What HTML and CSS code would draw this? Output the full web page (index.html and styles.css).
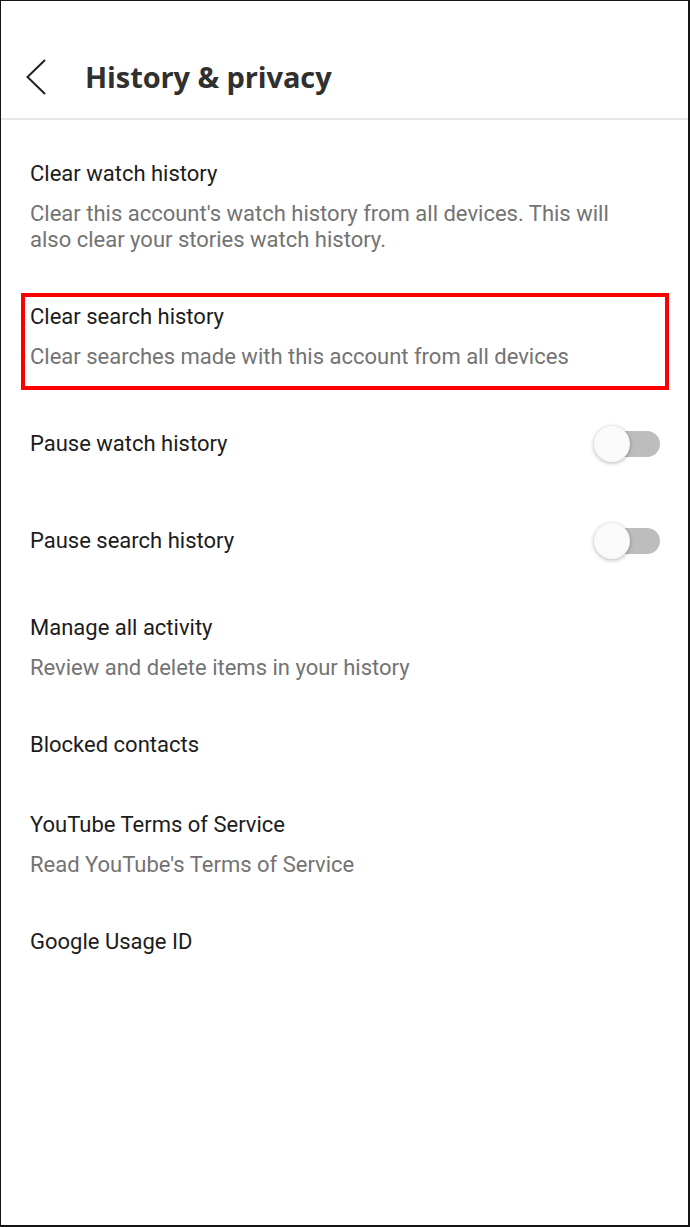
FILE: index.html
```html
<!DOCTYPE html>
<html lang="en">
<head>
<meta charset="utf-8">
<title>History &amp; privacy</title>
<link rel="stylesheet" href="styles.css">
</head>
<body>
<div class="page">
  <header class="header">
    <svg class="back" width="20" height="36" viewBox="0 0 20 36" aria-hidden="true">
      <path d="M19 1 L1.5 18 L19 35" fill="none" stroke="#222" stroke-width="2"/>
    </svg>
    <h1 class="title">History &amp; privacy</h1>
  </header>
  <div class="list">
    <div class="item">
      <div class="label">Clear watch history</div>
      <div class="desc">Clear this account's watch history from all devices. This will also clear your stories watch history.</div>
    </div>
    <div class="item highlight">
      <div class="label">Clear search history</div>
      <div class="desc">Clear searches made with this account from all devices</div>
    </div>
    <div class="item toggle-row">
      <div class="label">Pause watch history</div>
      <div class="switch"><span class="track"></span><span class="thumb"></span></div>
    </div>
    <div class="item toggle-row">
      <div class="label">Pause search history</div>
      <div class="switch"><span class="track"></span><span class="thumb"></span></div>
    </div>
    <div class="item">
      <div class="label">Manage all activity</div>
      <div class="desc">Review and delete items in your history</div>
    </div>
    <div class="item single">
      <div class="label">Blocked contacts</div>
    </div>
    <div class="item">
      <div class="label">YouTube Terms of Service</div>
      <div class="desc">Read YouTube's Terms of Service</div>
    </div>
    <div class="item single">
      <div class="label">Google Usage ID</div>
    </div>
  </div>
</div>
</body>
</html>
```
FILE: styles.css
```css
html, body {
  margin: 0;
  padding: 0;
  background: #fff;
}

.page {
  width: 690px;
  height: 1227px;
  box-sizing: border-box;
  border: 1px solid #151515;
  border-right-width: 2px;
  border-bottom-width: 2px;
  background: #fff;
  font-family: Roboto, "Liberation Sans", sans-serif;
  overflow: hidden;
}

.header {
  height: 119px;
  box-sizing: border-box;
  border-bottom: 2px solid #e8e8e8;
  padding: 0 0 23px 25px;
  display: flex;
  align-items: flex-end;
  gap: 39px;
}

.back {
  display: block;
  flex: none;
}

.title {
  margin: 0;
  font-family: "Open Sans", "Noto Sans", sans-serif;
  font-weight: 700;
  font-size: 29px;
  line-height: 36px;
  color: #303030;
  letter-spacing: -0.1px;
}

.list {
  padding-top: 15px;
}

.item {
  padding: 25px 28px 25px 29px;
  position: relative;
}

.item.single {
  padding-bottom: 27px;
}

.label {
  font-size: 22px;
  line-height: 28px;
  color: #1c1c1c;
}

.desc {
  margin-top: 13px;
  padding-right: 30px;
  font-size: 22px;
  line-height: 26px;
  color: #737373;
}

.highlight::after {
  content: "";
  position: absolute;
  top: 15px;
  bottom: 5px;
  left: 20px;
  right: 19px;
  border: 4px solid #ff0000;
}

.toggle-row {
  display: flex;
  align-items: center;
  justify-content: space-between;
  padding-top: 35px;
  padding-bottom: 34px;
}

.switch {
  position: relative;
  width: 66px;
  height: 28px;
  flex: none;
}

.track {
  position: absolute;
  right: 0;
  top: 1px;
  width: 60px;
  height: 26px;
  border-radius: 13px;
  background: #bdbdbd;
}

.thumb {
  position: absolute;
  left: 0;
  top: -4px;
  width: 36px;
  height: 36px;
  border-radius: 50%;
  background: #fafafa;
  box-shadow: 0 1px 4px rgba(0, 0, 0, 0.3);
}
```
